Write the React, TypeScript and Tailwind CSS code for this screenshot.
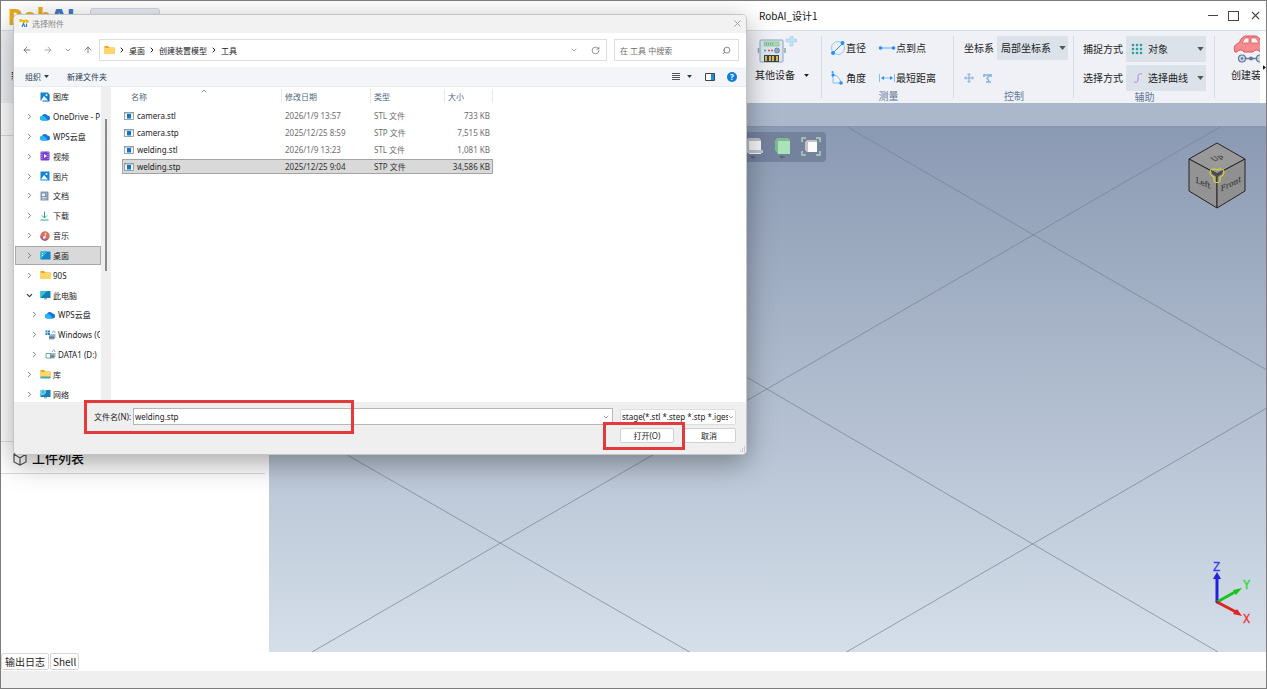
import type { ReactNode } from "react";
import {
  ArrowLeft,
  ArrowRight,
  ArrowUp,
  ChevronDown,
  ChevronRight,
  ChevronUp,
  RotateCw,
  Search,
  X,
} from "lucide-react";

type FileRow = {
  name: string;
  date: string;
  type: string;
  size: string;
  selected?: boolean;
};

type TreeItem = {
  label: string;
  icon: ReactNode;
  nested?: boolean;
  open?: boolean;
  leaf?: boolean;
  active?: boolean;
};

const files: FileRow[] = [
  { name: "camera.stl", date: "2026/1/9 13:57", type: "STL 文件", size: "733 KB" },
  { name: "camera.stp", date: "2025/12/25 8:59", type: "STP 文件", size: "7,515 KB" },
  { name: "welding.stl", date: "2026/1/9 13:23", type: "STL 文件", size: "1,081 KB" },
  { name: "welding.stp", date: "2025/12/25 9:04", type: "STP 文件", size: "34,586 KB", selected: true },
];

/* ICONS */

function PictureIcon({ stacked = false }: { stacked?: boolean }) {
  return (
    <svg viewBox="0 0 20 20" className="w-[10px] h-[10px]">
      {stacked && <path d="M5 4h14v15H5z" fill="#0a5fa8" />}
      <rect x="1" y="1" width={stacked ? 16 : 18} height={stacked ? 16 : 18} fill="#1683d8" />
      <path d="M2 17l6-9 8 9z" fill="#fff" />
      <circle cx="13" cy="6" r="2" fill="#fff" />
    </svg>
  );
}

function CloudIcon() {
  return (
    <svg viewBox="0 0 20 16" className="w-[10px] h-2">
      <path d="M5 15a4.500 4.500 0 0 1-1-9 6 6 0 0 1 11-1 5 5 0 0 1 0 10z" fill="#1672e0" />
      <path d="M5 15a4.500 4.500 0 0 1-1-9c5-1 9 3 11 9z" fill="#22b8f5" />
    </svg>
  );
}

function FolderIcon({ shelf = false }: { shelf?: boolean }) {
  return (
    <svg viewBox="0 0 22 20" className="w-[11px] h-[10px]">
      <path d="M1 2h7l3 3h10v13H1z" fill="#f0a61c" />
      <path d="M1 6h20v12H1z" fill="#ffd766" />
      {shelf && <path d="M1 15h20v4H1z" fill="#4aa6bd" />}
    </svg>
  );
}

function MonitorIcon({ globe = false }: { globe?: boolean }) {
  return (
    <svg viewBox="0 0 22 20" className="w-[11px] h-[10px]">
      <path d="M8 15h6v4H8z" fill="#9bb3c3" />
      <rect x="1" y="2" width="20" height="14" rx="1" fill="#127fb5" />
      <path d="M1 16L14 2H2a1 1 0 0 0-1 1z" fill="#37bfd8" />
      {globe && <circle cx="6" cy="6" r="5" fill="#4eb5e0" stroke="#e3f4fb" />}
    </svg>
  );
}

function DesktopIcon() {
  return (
    <svg viewBox="0 0 22 18" className="w-[11px] h-[9px]">
      <rect x="1" y="1" width="20" height="16" rx="1" fill="#1286c8" />
      <path d="M1 17L15 1H2a1 1 0 0 0-1 1z" fill="#33b6dd" />
      <path d="M4 5h2M4 9h2" stroke="#d8f3ff" strokeWidth="2" />
    </svg>
  );
}

function VideoIcon() {
  return (
    <svg viewBox="0 0 20 20" className="w-[10px] h-[10px]">
      <rect x="1" y="1" width="18" height="18" rx="2" fill="#7a3fcb" />
      <path d="M4 2v16M16 2v16" stroke="#c9a5f3" strokeWidth="2" strokeDasharray="2 2" />
      <path d="M8 6l6 4-6 4z" fill="#fff" />
    </svg>
  );
}

function DocIcon() {
  return (
    <svg viewBox="0 0 18 20" className="w-[9px] h-[10px]">
      <rect x="1" y="1" width="16" height="18" rx="1" fill="#8397b1" />
      <path d="M4 5h6v5H4z" fill="#e8eef6" />
      <path d="M4 13h10M4 16h7M12 6h2" stroke="#dce5ef" strokeWidth="1.500" />
    </svg>
  );
}

function DownloadIcon() {
  return (
    <svg viewBox="0 0 18 20" className="w-[9px] h-[10px]" fill="none" stroke="#1fae8c" strokeWidth="2">
      <path d="M9 1v13M4 9l5 5 5-5M1 18h16" />
    </svg>
  );
}

function MusicIcon() {
  return (
    <svg viewBox="0 0 20 20" className="w-[10px] h-[10px]">
      <circle cx="10" cy="10" r="9.500" fill="#d9705a" />
      <path d="M0.500 10a9.500 9.500 0 0 0 16 7z" fill="#a3648d" />
      <circle cx="8.500" cy="13" r="2.500" fill="#fff" />
      <path d="M10.500 13V4l3 2" stroke="#fff" strokeWidth="1.500" fill="none" />
    </svg>
  );
}

function DriveIcon({ system = false }: { system?: boolean }) {
  return (
    <svg viewBox="0 0 22 20" className="w-[11px] h-[10px]">
      <path d="M8 11l4-3h9v8l-3 3H8z" fill="#9fb4c5" />
      <path d="M8 13h10v4H8z" fill="#5f7d94" />
      {system ? (
        <path d="M1 1h4v4H1zM6 1h4v4H6zM1 6h4v4H1zM6 6h4v4H6z" fill="#1a86d9" />
      ) : (
        <path d="M2 9h9v9H2z" fill="#fff" stroke="#3aa14d" strokeWidth="1.500" />
      )}
      <path d="M15 6c0-5 5-5 5 0" stroke="#6ea4d3" strokeWidth="2" fill="none" />
    </svg>
  );
}

function FileIcon() {
  return (
    <svg viewBox="0 0 20 16" className="w-[10px] h-2 shrink-0">
      <rect x="1" y="1" width="18" height="14" fill="#f6f8fa" stroke="#7b8790" strokeWidth="1.500" />
      <path d="M1 2h18" stroke="#8f9aa2" strokeWidth="2" />
      <rect x="6" y="4" width="8" height="9" fill="#0b78cf" />
    </svg>
  );
}

function Caret({ className = "w-[7px] h-[4px] text-[#555]" }: { className?: string }) {
  return (
    <svg viewBox="0 0 8 5" className={`shrink-0 pointer-events-none ${className}`}>
      <path d="M0 0h8L4 5z" fill="currentColor" />
    </svg>
  );
}

function AppMark() {
  return (
    <svg viewBox="0 0 20 20" className="w-[10px] h-[10px]">
      <rect width="20" height="20" fill="#fff" />
      <path d="M2 9V3h3v3H3M8 5h3v3H8zM14 2v6h4V5h-4" stroke="#f2b705" strokeWidth="2.500" fill="none" />
      <path d="M6 18l3-7 3 7M15 11v7" stroke="#2f7fd0" strokeWidth="2.500" fill="none" />
    </svg>
  );
}

function DeviceIcon() {
  return (
    <svg viewBox="0 0 42 30" className="w-[42px] h-[30px]">
      <rect x="5" y="4" width="23" height="22" rx="1" fill="#dbe6f2" stroke="#8fa2ba" />
      <path d="M3.500 12v5M30 12v5" stroke="#8fa2ba" strokeWidth="1.500" />
      <rect x="9" y="6" width="15" height="4" fill="#a9dcb0" stroke="#6aae7a" strokeWidth="0.500" />
      <path d="M11 8h7" stroke="#4c8b5e" strokeDasharray="1 1" />
      <circle cx="10" cy="14.500" r="1" fill="#53a868" />
      <circle cx="14" cy="14.500" r="1" fill="#df4b54" />
      <circle cx="17" cy="14.500" r="1" fill="#df4b54" />
      <circle cx="22" cy="14.500" r="2.500" fill="#93a8c7" stroke="#5f7698" strokeWidth="0.700" />
      <rect x="9" y="19" width="15" height="7" fill="#3c4650" />
      <path d="M11 20v5M15 20v5M18 20v5M22 20v5" stroke="#dcb84d" strokeWidth="2" />
      <path d="M35 0h3v3h4v3h-4v4h-3V6h-4V3h4z" fill="#c3e1f6" stroke="#a0c6e2" strokeWidth="0.500" />
    </svg>
  );
}

function DiameterIcon() {
  return (
    <svg viewBox="0 0 16 16" className="w-4 h-4" fill="none" stroke="#7fbdf5">
      <circle cx="8" cy="8" r="6.500" strokeWidth="0.800" />
      <path d="M3 13L13 3" stroke="#1e90ff" />
      <circle cx="12.500" cy="3" r="2" fill="#1e90ff" stroke="none" />
      <circle cx="3" cy="13" r="2" fill="#1e90ff" stroke="none" />
    </svg>
  );
}

function AngleIcon() {
  return (
    <svg viewBox="0 0 16 16" className="w-4 h-4" fill="none" stroke="#7fbdf5">
      <path d="M3 2v11h8M3 5c5 0 7 4 8 8" />
      <circle cx="3" cy="5" r="1.600" fill="#1e90ff" stroke="none" />
      <circle cx="11" cy="13" r="1.800" fill="#1e90ff" stroke="none" />
      <circle cx="2.500" cy="2" r="1" fill="#1e90ff" stroke="none" />
    </svg>
  );
}

function PointToPointIcon() {
  return (
    <svg viewBox="0 0 18 10" className="w-[18px] h-[10px]">
      <path d="M2 5h14" stroke="#5aaeff" />
      <circle cx="2.500" cy="5" r="1.800" fill="#1e90ff" />
      <circle cx="15.500" cy="5" r="1.800" fill="#1e90ff" />
    </svg>
  );
}

function DistanceIcon() {
  return (
    <svg viewBox="0 0 18 10" className="w-[18px] h-[10px]">
      <path d="M1.500 1v8M16.500 1v8M4 5h10" stroke="#7fbdf5" />
      <path d="M3 5l3-2v4zM15 5l-3-2v4z" fill="#1e90ff" />
    </svg>
  );
}

function CarIcon() {
  return (
    <svg viewBox="0 0 34 28" className="w-[34px] h-7 shrink-0">
      <path d="M4 17c-2-5 0-8 4-9 2-4 4-7 7-7h9c3 0 5 3 7 7 3 1 4 6 2 9h-4a4 4 0 0 0-7 0H13a4 4 0 0 0-7 0z" fill="#f58b8d" stroke="#d6555b" />
      <path d="M11 8l3-5h4v5zM20 3h5l3 5h-8z" fill="#f8f3f5" stroke="#d6555b" strokeWidth="0.700" />
      <path d="M14 23.500h12" stroke="#5f7698" strokeWidth="1.500" />
      <circle cx="11" cy="23.500" r="3.500" fill="#c9d5e4" stroke="#5f7698" strokeWidth="1.200" />
      <circle cx="11" cy="23.500" r="1.200" fill="#5f7698" />
      <circle cx="20" cy="23.500" r="2" fill="#5f7698" />
      <circle cx="29" cy="23.500" r="3.500" fill="#c9d5e4" stroke="#5f7698" strokeWidth="1.200" />
    </svg>
  );
}

const tree: TreeItem[] = [
  { label: "图库", icon: <PictureIcon stacked />, leaf: true },
  { label: "OneDrive - Personal", icon: <CloudIcon /> },
  { label: "WPS云盘", icon: <CloudIcon /> },
  { label: "视频", icon: <VideoIcon /> },
  { label: "图片", icon: <PictureIcon /> },
  { label: "文档", icon: <DocIcon /> },
  { label: "下载", icon: <DownloadIcon /> },
  { label: "音乐", icon: <MusicIcon /> },
  { label: "桌面", icon: <DesktopIcon />, active: true },
  { label: "90S", icon: <FolderIcon /> },
  { label: "此电脑", icon: <MonitorIcon />, open: true },
  { label: "WPS云盘", icon: <CloudIcon />, nested: true },
  { label: "Windows (C:)", icon: <DriveIcon system />, nested: true },
  { label: "DATA1 (D:)", icon: <DriveIcon />, nested: true },
  { label: "库", icon: <FolderIcon shelf /> },
  { label: "网络", icon: <MonitorIcon globe /> },
];

/* RIBBON */

function RibbonSelect({
  label,
  value,
  icon,
  className,
}: {
  label: string;
  value: string;
  icon?: ReactNode;
  className: string;
}) {
  return (
    <label className="flex items-center gap-[3px]">
      <span>{label}</span>
      <span className={`flex items-center bg-[#dbe2ea] pl-1 pr-0.5 ${className}`}>
        {icon}
        <select className="appearance-none bg-transparent flex-1 min-w-0 outline-none">
          <option>{value}</option>
        </select>
        <Caret />
      </span>
    </label>
  );
}

function Ribbon() {
  return (
    <div className="flex h-[73px] border-t border-[#d5dfe8] text-[10px] leading-4 text-[#222]">
      <div className="flex flex-1 min-w-0 overflow-hidden bg-[#eff1f6]">
        <div className="w-[749px] shrink-0 pl-[10px] pt-[37px]">新建</div>

        <div className="w-[72px] shrink-0 my-[5px] pl-[5px] border-r border-[#d3dde8]">
          <DeviceIcon />
          <button className="flex items-center gap-[9px] mt-px whitespace-nowrap">
            其他设备
            <Caret className="w-[5px] h-[3px] text-[#222]" />
          </button>
        </div>

        <div className="w-[132px] shrink-0 my-[5px] pl-2 border-r border-[#d3dde8]">
          <div className="grid grid-cols-[48px_auto] gap-y-[14px] pt-1 whitespace-nowrap">
            <button className="flex items-center"><DiameterIcon />直径</button>
            <button className="flex items-center"><PointToPointIcon />点到点</button>
            <button className="flex items-center"><AngleIcon />角度</button>
            <button className="flex items-center"><DistanceIcon />最短距离</button>
          </div>
          <p className="text-center text-[#64789a] mt-[2px] pr-[6px] leading-4">测量</p>
        </div>

        <div className="w-[120px] shrink-0 my-[5px] pl-[10px] border-r border-[#d3dde8]">
          <RibbonSelect label="坐标系" value="局部坐标系" className="h-6 w-[71px]" />
          <div className="flex gap-[9px] mt-[13px] h-[15px]">
            <svg viewBox="0 0 10 10" className="w-[10px] h-[10px]">
              <path d="M5 1v8M1 5h8M3.500 2L5 .5 6.500 2M3.500 8L5 9.500 6.500 8M2 3.500L.5 5 2 6.500M8 3.500L9.500 5 8 6.500" stroke="#7ba7db" fill="none" />
            </svg>
            <svg viewBox="0 0 10 10" className="w-[10px] h-[10px]">
              <path d="M1 1v3M1 2h7M8 1v3M7 2L4 5l2 3M3 9h5" stroke="#7fb0df" strokeWidth="1.500" fill="none" />
            </svg>
          </div>
          <p className="text-center text-[#64789a] leading-4 pr-[9px]">控制</p>
        </div>

        <div className="w-[141px] shrink-0 my-[5px] pl-[9px] border-r border-[#d3dde8]">
          <div className="flex flex-col gap-[3px]">
            <RibbonSelect
              label="捕捉方式"
              value="对象"
              className="h-[26px] w-20 gap-1"
              icon={
                <svg viewBox="0 0 14 14" className="w-[14px] h-[14px]">
                  <path d="M3 1v12M7 1v12M11 1v12M1 3h12M1 7h12M1 11h12" stroke="#8fc3cf" strokeWidth="0.700" />
                  <path d="M2 3h10M2 7h10M2 11h10" stroke="#2aa39c" strokeWidth="2" strokeDasharray="2 2" />
                </svg>
              }
            />
            <RibbonSelect
              label="选择方式"
              value="选择曲线"
              className="h-[26px] w-20 gap-1"
              icon={
                <svg viewBox="0 0 14 14" className="w-[14px] h-[14px]">
                  <path d="M4 11c4 1 4-1 4-4s0-5 4-4" stroke="#b37de8" fill="none" />
                </svg>
              }
            />
          </div>
          <p className="text-center text-[#64789a] mt-[-2px] leading-4 pr-[8px]">辅助</p>
        </div>

        <button className="flex flex-col items-start shrink-0 w-[70px] pl-4 pt-1 whitespace-nowrap">
          <CarIcon />
          <span className="mt-1">创建装置</span>
        </button>
      </div>
      <div className="w-[6px] shrink-0 bg-white flex items-center justify-end">
        <svg viewBox="0 0 4 6" className="w-[3px] h-[5px]">
          <path d="M0 0l4 3-4 3z" fill="#111" />
        </svg>
      </div>
    </div>
  );
}

/* 3D VIEW */

function ViewButtonIcon({ kind }: { kind: string }) {
  if (kind === "fit") {
    return (
      <svg viewBox="0 0 22 24" className="w-[22px] h-6">
        <path d="M5 7l2-2h10v9l-2 3H7l-2-2z" fill="#c3c3c6" />
        <path d="M8 7h9v10H8z" fill="#fbfbfc" />
        <path d="M2 7V3h4M16 3h4v4M20 16v4h-4M6 20H2v-4" stroke="#a6d8b4" strokeWidth="1.500" fill="none" />
      </svg>
    );
  }

  const shaded = kind === "shaded";

  return (
    <svg viewBox="0 0 22 24" className="w-[22px] h-6">
      <path d="M4 6l2-3h11l2 2v11l-3 3H7l-3-4z" fill={shaded ? "#83b991" : "#bfc0c4"} />
      <path d="M7 6h12v13H7z" fill={shaded ? "#abe3b9" : "#f7f8fa"} />
      <path d="M8 21h6l-3 3z" fill="#56647c" />
      {!shaded && <path d="M5 15h16v3H5z" fill="#b9c7cb" />}
    </svg>
  );
}

function Viewport() {
  return (
    <div className="relative flex-1 min-w-0 mt-[23px] overflow-hidden border-t border-[#8796ad] bg-gradient-to-b from-[#8b9ab3] to-[#d5dfea]">
      <svg viewBox="0 0 998 526" preserveAspectRatio="none" className="absolute inset-0 w-full h-full">
        <path
          d="M952 0L43 526M579 0L998 243M477 250L950 526M79 329L421 526M998 282L578 526"
          stroke="#76808f"
          strokeWidth="0.700"
          fill="none"
        />
      </svg>

      <div className="relative mx-auto mt-[5px] w-[116px] h-[30px] rounded-[4px] bg-[#74829e] flex items-center justify-around">
        <span className="w-[22px]" />
        {["solid", "shaded", "fit"].map((kind) => (
          <button key={kind} aria-label={kind} className="w-[22px]">
            <ViewButtonIcon kind={kind} />
          </button>
        ))}
      </div>

      {/* VIEW CUBE */}

      <svg viewBox="0 0 60 68" className="absolute right-[19px] top-[15px] w-[60px] h-[68px]">
        <g fill="#939393" stroke="#242424" strokeLinejoin="round">
          <path d="M30 1l28 16-28 15L2 17z" fill="#999" />
          <path d="M2 17l28 15v34L2 49z" />
          <path d="M58 17L30 32v34l28-17z" fill="#909090" />
        </g>
        <path d="M24 28l6 3 6-3-1 4-5 3-5-3z" fill="#4b4b4b" />
        <path d="M30 28c-2-2-7-1-7 2 0 2 1 4 4 5v4c0 2 6 2 6 0v-4c3-1 4-3 4-5 0-3-5-4-7-2z" stroke="#eee51a" fill="none" />
        <g className="[font-family:'DejaVu_Serif',serif]" fill="#242424" fontSize="9" textAnchor="middle">
          <text x="0" y="3" transform="matrix(.8 .36 0 .9 16 41)">Left</text>
          <text x="0" y="3" transform="matrix(.8 -.4 0 .9 44 42)">Front</text>
          <text x="0" y="3" transform="matrix(.8 -.3 .6 .5 30 16)">Up</text>
        </g>
      </svg>

      {/* AXES */}

      <svg viewBox="0 0 54 66" className="absolute right-[10px] bottom-[25px] w-[54px] h-[66px]">
        <path d="M15 41V17" stroke="#2222dd" strokeWidth="3" />
        <path d="M11 18l4-7 4 7z" fill="#2222dd" />
        <path d="M15 41l18-10" stroke="#18c41b" strokeWidth="3" />
        <path d="M31 29l9-2-6 7z" fill="#18c41b" />
        <path d="M15 41l19 10" stroke="#e02323" strokeWidth="3" />
        <path d="M35 48l5 7-9-2z" fill="#e02323" />
        <circle cx="15" cy="41" r="1.500" fill="#7d3355" />
        <g className="[font-family:'Liberation_Mono',monospace]" fontSize="12">
          <text x="11" y="10" fill="#3a3aee" stroke="#3a3aee" strokeWidth="0.300">Z</text>
          <text x="41" y="28" fill="#26dc29" stroke="#26dc29" strokeWidth="0.300">Y</text>
          <text x="41" y="62" fill="#f03434" stroke="#f03434" strokeWidth="0.300">X</text>
        </g>
      </svg>
    </div>
  );
}

/* FILE DIALOG */

function Sidebar() {
  return (
    <div className="w-[97px] shrink-0 flex overflow-hidden">
      <ul className="w-[87px] h-[317px] flex flex-col">
        {tree.map((item, i) => (
          <li
            key={i}
            className={`flex-1 flex items-center overflow-hidden whitespace-nowrap ml-px border ${
              item.active ? "bg-[#d9d9d9] border-[#a9a9a9]" : "border-transparent"
            } ${item.nested ? "pl-[14px]" : "pl-[9px]"}`}
          >
            <span className="w-[15px] shrink-0">
              {item.leaf ? null : item.open ? (
                <ChevronDown size={9} color="#333" strokeWidth={3} />
              ) : (
                <ChevronRight size={9} color="#555" />
              )}
            </span>
            <span className="w-[13px] shrink-0 flex items-center">{item.icon}</span>
            <span>{item.label}</span>
          </li>
        ))}
      </ul>
      <div className="w-[10px] bg-[#efefef] pt-8 flex justify-center">
        <div className="w-[2px] h-[152px] bg-[#8a8a8a]" />
      </div>
    </div>
  );
}

function FileTable() {
  return (
    <div className="flex-1 min-w-0 pl-[11px]">
      <table className="table-fixed w-[371px] border-separate border-spacing-x-0 border-spacing-y-[2px]">
        <colgroup>
          <col className="w-[160px]" />
          <col className="w-[89px]" />
          <col className="w-[74px]" />
          <col className="w-[48px]" />
        </colgroup>
        <thead className="text-[#4f6780]">
          <tr className="h-[14px]">
            <th className="font-normal text-left border-r border-[#e8e8e8] pl-[9px]">
              <span className="flex items-center">
                <span className="w-[69px]">名称</span>
                <ChevronUp size={8} className="self-start -mt-1" />
              </span>
            </th>
            <th className="font-normal text-left border-r border-[#e8e8e8] pl-[3px]">修改日期</th>
            <th className="font-normal text-left border-r border-[#e8e8e8] pl-[3px]">类型</th>
            <th className="font-normal text-left border-r border-[#e8e8e8] pl-[3px]">大小</th>
          </tr>
        </thead>
        <tbody>
          <tr className="h-px" />
          {files.map((file) => (
            <tr
              key={file.name}
              className={`h-[15px] ${
                file.selected
                  ? "bg-[#d9d9d9] text-[#333] outline outline-1 -outline-offset-1 outline-[#a3a3a3]"
                  : "text-[#6d6d6d]"
              }`}
            >
              <td className="pl-[2px] text-[#222]">
                <span className="flex items-center gap-[3px]">
                  <FileIcon />
                  {file.name}
                </span>
              </td>
              <td className="pl-[3px]">{file.date}</td>
              <td className="pl-[3px]">{file.type}</td>
              <td className="text-right pr-[3px] whitespace-nowrap">{file.size}</td>
            </tr>
          ))}
        </tbody>
      </table>
    </div>
  );
}

function FileDialog() {
  return (
    <div
      role="dialog"
      aria-label="选择附件"
      className="absolute left-[12px] top-[13px] w-[734px] rounded-[5px] overflow-hidden bg-white border border-[#c4c4c4] shadow-[0_8px_28px_rgba(0,0,0,0.35)] text-[8px] leading-[11px] text-[#222] [font-family:'Noto_Sans','Noto_Sans_CJK_SC',sans-serif]"
    >
      <div className="h-[18px] bg-[#f2f2f2] flex items-center pl-[5px] pr-[3px] pb-[2px] gap-[3px]">
        <AppMark />
        <span className="flex-1 text-[#888]">选择附件</span>
        <button aria-label="关闭">
          <X size={11} color="#999" />
        </button>
      </div>

      {/* ADDRESS BAR */}

      <div className="h-[34px] flex items-center pl-2 pr-[7px] text-[#666]">
        <div className="flex items-center gap-[11px] w-[77px]">
          <button aria-label="后退"><ArrowLeft size={10} /></button>
          <button aria-label="前进"><ArrowRight size={10} color="#999" /></button>
          <button aria-label="最近"><ChevronDown size={8} /></button>
          <button aria-label="向上"><ArrowUp size={10} /></button>
        </div>
        <div className="flex-1 h-[22px] border border-[#dedede] flex items-center pl-1 pr-[6px] gap-[3px] text-[#222]">
          <FolderIcon />
          <ChevronRight size={8} strokeWidth={3} />
          <span>桌面</span>
          <ChevronRight size={8} strokeWidth={3} />
          <span>创建装置模型</span>
          <ChevronRight size={8} strokeWidth={3} />
          <span className="flex-1">工具</span>
          <ChevronDown size={8} color="#777" className="mr-[10px]" />
          <button aria-label="刷新"><RotateCw size={9} color="#777" /></button>
        </div>
        <label className="ml-[7px] w-[125px] h-[22px] border border-[#dedede] flex items-center pl-[5px] pr-[7px]">
          <input
            aria-label="在 工具 中搜索"
            placeholder="在 工具 中搜索"
            className="flex-1 min-w-0 outline-none placeholder:text-[#6d6d6d]"
          />
          <Search size={9} className="-scale-x-100" />
        </label>
      </div>

      {/* TOOLBAR */}

      <div className="h-[20px] bg-[#f4f5f8] border-b border-[#e9eaec] flex items-center pl-[11px] pr-[9px] text-[#1f3c5c]">
        <button className="flex items-center gap-[3px] mr-[18px]">
          组织
          <Caret className="w-[5px] h-[3px]" />
        </button>
        <button>新建文件夹</button>
        <div className="ml-auto flex items-center">
          <button aria-label="视图" className="flex items-center gap-[7px] mr-[13px]">
            <svg viewBox="0 0 8 8" className="w-2 h-2" shapeRendering="crispEdges">
              <path d="M0 .5h8M0 2.500h8M0 4.500h8M0 6.500h8" stroke="#555" />
            </svg>
            <Caret className="w-[5px] h-[3px]" />
          </button>
          <button aria-label="预览窗格" className="mr-[12px]">
            <svg viewBox="0 0 10 8" className="w-[10px] h-2">
              <path d="M.5 .5h9v7h-9z" fill="#fff" stroke="#444" />
              <path d="M6 1h3v6H6z" fill="#1592e0" />
            </svg>
          </button>
          <button aria-label="帮助" className="w-[10px] h-[10px] rounded-full bg-[#0a7fd9] text-white font-bold leading-[10px]">
            ?
          </button>
        </div>
      </div>

      <div className="flex h-[315px] overflow-hidden">
        <Sidebar />
        <FileTable />
      </div>

      {/* FOOTER */}

      <div className="h-[52px] bg-[#efefef] pt-[6px] pl-[80px] pr-[10px]">
        <div className="flex items-center h-[17px]">
          <label htmlFor="filename" className="w-[39px] whitespace-nowrap">
            文件名(N):
          </label>
          <div className="flex-1 h-[17px] flex items-center bg-white border border-[#b5b5b5] pl-px pr-[2px]">
            <input id="filename" defaultValue="welding.stp" className="flex-1 min-w-0 outline-none" />
            <ChevronDown size={8} color="#777" />
          </div>
          <div className="ml-[7px] w-[116px] h-[16px] flex items-center bg-white border border-[#ddd] rounded-[2px] pl-px">
            <select aria-label="文件类型" className="appearance-none flex-1 min-w-0 outline-none bg-transparent">
              <option>stage(*.stl *.step *.stp *.iges</option>
            </select>
            <ChevronDown size={8} color="#777" className="-ml-px" />
          </div>
        </div>
        <div className="flex justify-end gap-2 mt-[3px]">
          <button className="w-[54px] h-[15px] leading-[13px] bg-white border border-[#d2d2d2] rounded-[2px]">打开(O)</button>
          <button className="w-[54px] h-[15px] leading-[13px] bg-white border border-[#d2d2d2] rounded-[2px]">取消</button>
        </div>
      </div>

      <svg viewBox="0 0 8 8" className="absolute right-0 bottom-0 w-2 h-2">
        <path d="M6 1h1M4 3h1M6 3h1M2 5h1M4 5h1M6 5h1" stroke="#aaa" />
      </svg>
    </div>
  );
}

export default function App() {
  return (
    <div className="relative min-h-screen flex flex-col overflow-hidden bg-white border border-[#7c7c7c] text-[#222] [font-family:'Noto_Sans_CJK_SC','Noto_Sans',sans-serif]">

      {/* TITLE BAR */}

      <div className="h-[29px] flex items-center pl-[7px]">
        <div className="text-[22px] leading-7 font-extrabold w-[82px] [font-family:'Open_Sans',sans-serif]">
          <span className="text-[#eaad1d]">Rob</span>
          <span className="text-[#3f79c8]">AI</span>
        </div>
        <div className="self-end w-[70px] h-[22px] rounded-t-[3px] border border-[#d0d6e2] bg-[#e9ecf3]" />
        <span className="ml-[599px] text-[10px] leading-4 text-[#111] whitespace-nowrap">RobAI_设计1</span>
        <div className="ml-auto flex items-center gap-[10px] pr-1 text-[#444]">
          <button aria-label="最小化" className="w-[10px] h-px bg-[#444]" />
          <button aria-label="最大化" className="w-[11px] h-[10px] border border-[#444]" />
          <button aria-label="关闭"><X size={13} /></button>
        </div>
      </div>

      <Ribbon />

      <div className="flex-1 flex bg-[#abb8cc]">
        <div className="w-[268px] shrink-0 bg-white">
          <div className="h-[33px] border-b border-[#dcdcdc]" />
          <div className="mt-[305px] border-t border-[#dcdcdc]" />
          <div className="h-8 mr-1 pl-3 flex items-center gap-[5px] border-b border-[#dcdcdc] text-[13px] leading-5 font-medium text-[#111]">
            <svg viewBox="0 0 14 16" className="w-[14px] h-4" fill="none" stroke="#555" strokeWidth="1.200">
              <path d="M7 1l6 3v8l-6 3-6-3V4zM1 4l6 4 6-4M7 8v7" />
            </svg>
            工件列表
          </div>
        </div>
        <Viewport />
      </div>

      <div className="h-[19px] flex items-center gap-px text-[10px] leading-[15px]">
        <button className="h-[17px] px-[3px] border border-[#d6d6d6] rounded-[2px]">输出日志</button>
        <button className="h-[17px] px-[2px] border border-[#d6d6d6] rounded-[2px]">Shell</button>
      </div>
      <div className="h-[17px] bg-[#efefef]" />

      <FileDialog />

      {/* HIGHLIGHT BOXES */}

      <div className="absolute left-[83px] top-[399px] w-[270px] h-[34px] border-3 border-[#e33b3b] pointer-events-none" />
      <div className="absolute left-[602px] top-[421px] w-[82px] h-[28px] border-3 border-[#e33b3b] pointer-events-none" />
    </div>
  );
}
